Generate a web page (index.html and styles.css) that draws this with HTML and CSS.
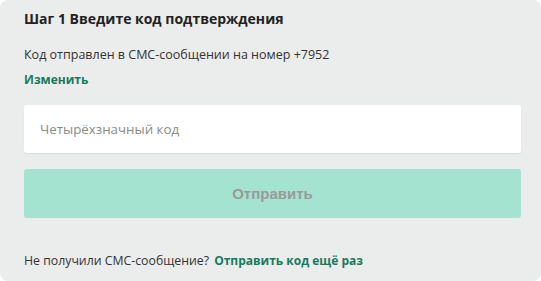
FILE: index.html
```html
<!DOCTYPE html>
<html lang="ru">
<head>
<meta charset="utf-8">
<link rel="stylesheet" href="styles.css">
</head>
<body>
<div class="card">
  <h1 class="title">Шаг 1 Введите код подтверждения</h1>
  <p class="info">Код отправлен в СМС-сообщении на номер +7952</p>
  <a class="link change">Изменить</a>
  <div class="field">Четырёхзначный код</div>
  <button class="submit">Отправить</button>
  <p class="resend">Не получили СМС-сообщение? <a class="link">Отправить код ещё раз</a></p>
</div>
</body>
</html>
```
FILE: styles.css
```css
html, body { margin: 0; padding: 0; background: #ffffff; }
body { font-family: "Open Sans", "Noto Sans", sans-serif; color: #333; }
.card {
  box-sizing: border-box;
  width: 541px;
  height: 281px;
  background: #ebecec;
  border-radius: 8px;
  padding: 9px 20px 0 24px;
  display: flex;
  flex-direction: column;
}
.title { margin: 0; font-size: 14px; font-weight: 700; line-height: 20px; color: #222; }
.info { margin: 18px 0 0; font-size: 12.5px; line-height: 16px; color: #333; }
.link { color: #177a5d; font-weight: 700; text-decoration: none; }
.change { font-size: 12px; line-height: 16px; margin-top: 9px; display: block; }
.field {
  margin-top: 17px;
  height: 48px;
  background: #fff;
  border-radius: 3px;
  box-shadow: 0 1px 1px rgba(0,0,0,0.08);
  padding-left: 16px;
  display: flex;
  align-items: center;
  font-size: 13.3px;
  color: #8a8a8a;
}
.submit {
  margin-top: 16px;
  height: 49px;
  border: 0;
  border-radius: 3px;
  background: #a4e3d0;
  font-family: "Liberation Sans", Arial, sans-serif;
  font-weight: 700;
  font-size: 15px;
  color: #9a9a9a;
}
.resend { margin: 35px 0 0; font-size: 12.3px; line-height: 16px; color: #333; }
.resend .link { font-size: 12px; margin-left: 2px; }
```
